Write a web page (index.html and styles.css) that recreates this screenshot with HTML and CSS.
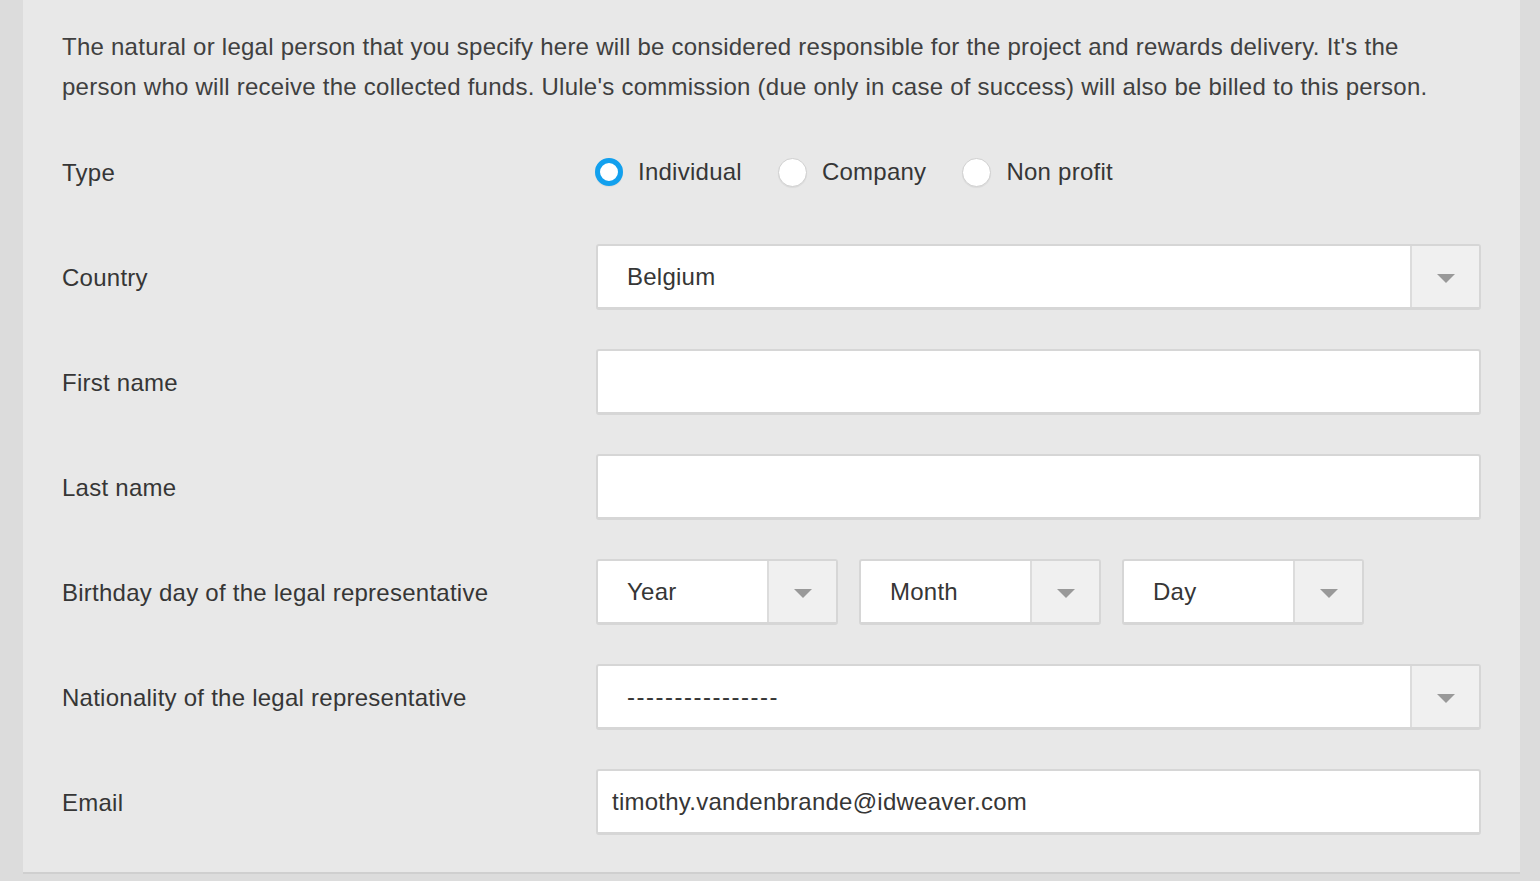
FILE: index.html
```html
<!DOCTYPE html>
<html lang="en">
<head>
<meta charset="utf-8">
<title>Legal person</title>
<link rel="stylesheet" href="styles.css">
</head>
<body>
<div class="page">
  <section class="panel">
    <p class="intro">The natural or legal person that you specify here will be considered responsible for the project and rewards delivery. It's the person who will receive the collected funds. Ulule's commission (due only in case of success) will also be billed to this person.</p>
    <div class="form">
      <div class="label">Type</div>
      <div class="field radios">
        <span class="radio-item"><span class="radio checked"></span><span class="radio-text">Individual</span></span>
        <span class="radio-item"><span class="radio"></span><span class="radio-text">Company</span></span>
        <span class="radio-item"><span class="radio"></span><span class="radio-text">Non profit</span></span>
      </div>

      <div class="label">Country</div>
      <div class="field">
        <div class="select"><span class="select-value">Belgium</span><span class="select-arrow"><span class="tri"></span></span></div>
      </div>

      <div class="label">First name</div>
      <div class="field"><div class="input"></div></div>

      <div class="label">Last name</div>
      <div class="field"><div class="input"></div></div>

      <div class="label">Birthday day of the legal representative</div>
      <div class="field dates">
        <div class="select small"><span class="select-value">Year</span><span class="select-arrow"><span class="tri"></span></span></div>
        <div class="select small"><span class="select-value">Month</span><span class="select-arrow"><span class="tri"></span></span></div>
        <div class="select small"><span class="select-value">Day</span><span class="select-arrow"><span class="tri"></span></span></div>
      </div>

      <div class="label">Nationality of the legal representative</div>
      <div class="field">
        <div class="select"><span class="select-value dashes">----------------</span><span class="select-arrow"><span class="tri"></span></span></div>
      </div>

      <div class="label">Email</div>
      <div class="field"><div class="input"><span class="input-value">timothy.vandenbrande@idweaver.com</span></div></div>
    </div>
  </section>
</div>
</body>
</html>
```

FILE: styles.css
```css
* { box-sizing: border-box; }
html, body { margin: 0; padding: 0; }
body {
  background: #dcdcdc;
  font-family: "Liberation Sans", Arial, Helvetica, sans-serif;
  color: #363636;
  font-size: 24px;
  letter-spacing: 0.25px;
}
.page {
  height: 881px;
  overflow: hidden;
  padding-left: 23px;
}
.panel {
  width: 1497px;
  background: #e8e8e8;
  padding: 27px 39px 37px 39px;
  border-bottom: 2px solid #cfcfcf;
}
.intro {
  margin: 0;
  max-width: 1400px;
  line-height: 40px;
  color: #404040;
}
.form {
  margin-top: 32px;
  display: grid;
  grid-template-columns: 534px 1fr;
  row-gap: 39px;
}
.label {
  height: 66px;
  display: flex;
  align-items: center;
  padding-top: 2px;
  color: #363636;
}
.field {
  height: 66px;
  display: flex;
  align-items: center;
}
.radio-item {
  display: flex;
  align-items: center;
  margin-right: 36px;
}
.radio {
  width: 29px;
  height: 29px;
  border-radius: 50%;
  background: #fff;
  border: 1px solid #cfcfcf;
  box-shadow: 0 1px 1px rgba(0,0,0,0.06);
  margin-right: 15px;
}
.radio.checked {
  border: 5px solid #12a0ee;
  width: 28px;
  height: 28px;
  margin-left: -1px;
}
.radio-text { color: #363636; }
.select, .input {
  width: 100%;
  height: 66px;
  background: #fff;
  border: 2px solid #d6d6d6;
  border-bottom-width: 3px;
  border-radius: 3px;
  display: flex;
  align-items: center;
}
.select-value {
  flex: 1;
  padding-left: 29px;
  color: #363636;
}
.select-value.dashes { letter-spacing: 1.5px; }
.select-arrow {
  width: 69px;
  align-self: stretch;
  background: #f0f0f0;
  border-left: 2px solid #dcdcdc;
  display: flex;
  align-items: center;
  justify-content: center;
  padding-top: 3px;
}
.tri {
  width: 0;
  height: 0;
  border-left: 9px solid transparent;
  border-right: 9px solid transparent;
  border-top: 9px solid #999;
}
.input-value {
  padding-left: 14px;
  color: #363636;
}
.dates { gap: 21px; }
.select.small { width: 242px; }
```
